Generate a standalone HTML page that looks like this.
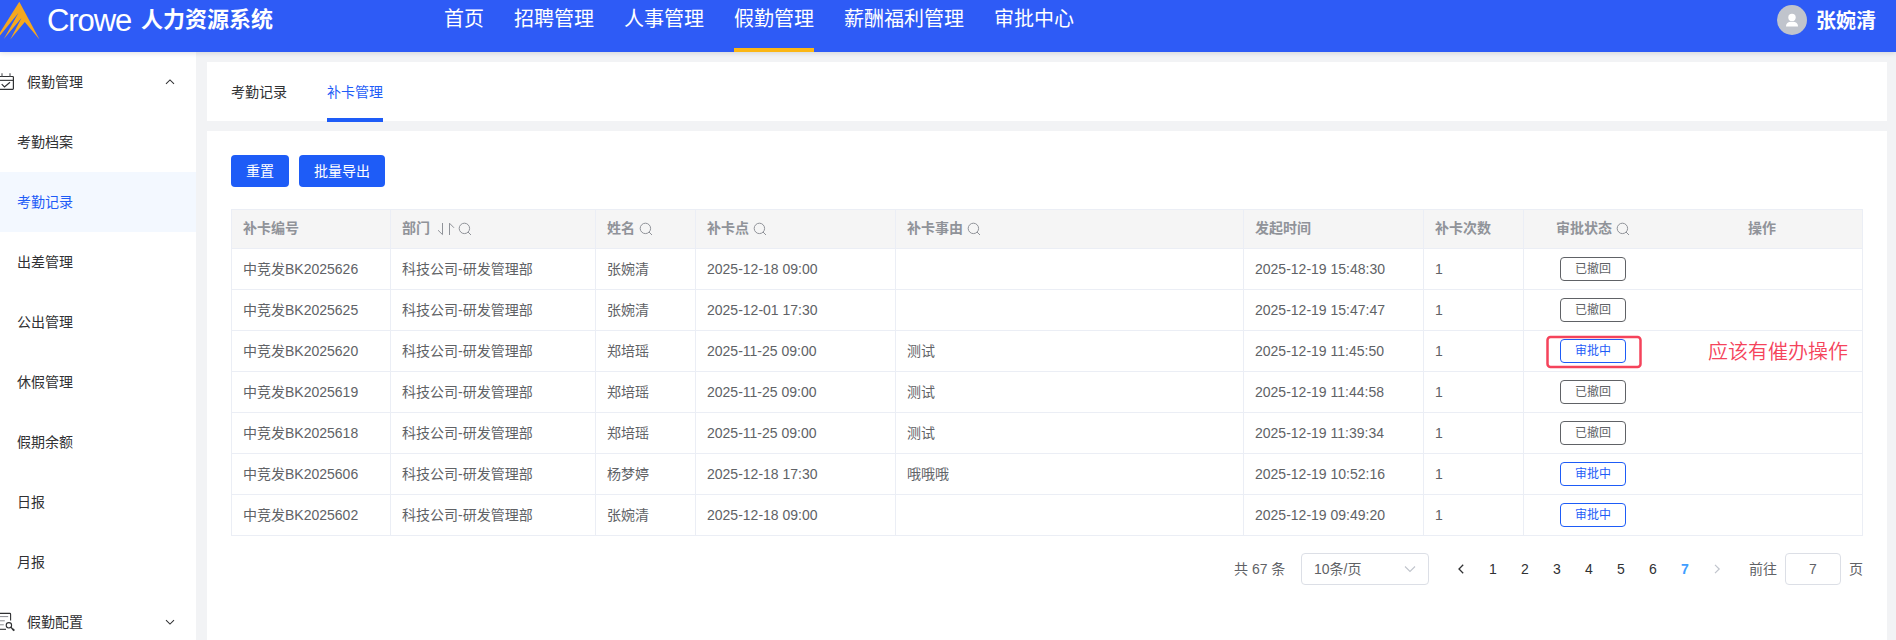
<!DOCTYPE html>
<html lang="zh-CN">
<head>
<meta charset="utf-8">
<title>人力资源系统</title>
<style>
*{box-sizing:border-box;margin:0;padding:0}
html,body{width:1896px;height:640px;overflow:hidden}
body{position:relative;background:#f2f3f5;font-family:"Liberation Sans","Noto Sans CJK SC",sans-serif;font-size:14px;color:#303133}
.abs{position:absolute}
/* header */
#hd{position:absolute;left:0;top:0;width:1896px;height:52px;background:#2e5bf6;box-shadow:0 1px 5px rgba(0,21,41,.14);z-index:5}
#hd .crowe{position:absolute;left:47px;top:2px;font-size:31px;line-height:37px;color:#fff;letter-spacing:-1.1px;font-weight:400}
#hd .title{position:absolute;left:141px;top:2px;font-size:22px;line-height:36px;font-weight:700;color:#fff;white-space:nowrap}
#hd .nav{position:absolute;top:0;height:52px;font-size:20px;line-height:38px;color:#fff;white-space:nowrap}
#hd .nav.on{border-bottom:4px solid #fbb614}
#hd .av{position:absolute;left:1777px;top:5px;width:30px;height:30px;border-radius:50%;background:#c0c4cc;overflow:hidden}
#hd .uname{position:absolute;left:1816px;top:3px;font-size:20px;line-height:36px;font-weight:700;color:#fff;white-space:nowrap}
/* sidebar */
#sb{position:absolute;left:0;top:52px;width:196px;height:588px;background:#fff}
#sb .it{position:absolute;left:0;width:196px;height:60px;line-height:60px;font-size:14px;color:#303133;white-space:nowrap}
#sb .it span{position:absolute;left:17px;top:0}
#sb .it.g span{left:27px}
#sb .it.on{background:#f3f8ff;color:#1e5cf7}
#sb svg{position:absolute}
/* cards */
.card{position:absolute;background:#fff}
.tab{position:absolute;top:62px;height:59px;line-height:60px;font-size:14px;color:#303133;white-space:nowrap}
.tab.on{color:#1e5cf7}
.btn{position:absolute;top:155px;height:32px;line-height:32px;border-radius:4px;background:#1e5cf7;color:#fff;font-size:14px;text-align:center}
/* table */
#tb{position:absolute;left:231px;top:209px;width:1632px;border-collapse:separate;border-spacing:0;table-layout:fixed;border-top:1px solid #ebeef5;border-left:1px solid #ebeef5;border-right:1px solid #ebeef5;font-size:14px;color:#606266}
#tb th,#tb td{border-bottom:1px solid #ebeef5;border-right:1px solid #ebeef5;padding:0 0 0 11px;text-align:left;white-space:nowrap;overflow:hidden;vertical-align:middle}
#tb th{height:39px;line-height:22px;padding-bottom:2px;background:#f5f5f5;color:#909399;font-weight:700}
#tb td{height:41px;line-height:22px;background:#fff}
#tb .c{text-align:center;padding-left:0}
#tb .nb{border-right:none}
.tag{display:inline-block;width:66px;height:24px;line-height:22px;border:1px solid #606266;border-radius:4px;font-size:12px;color:#606266;text-align:center;vertical-align:middle;background:#fff}
.tag.b{border-color:#1e5cf7;color:#1e5cf7}
th svg{vertical-align:-4px}
/* pagination */
.pg{position:absolute;top:553px;height:32px;line-height:32px;font-size:14px;color:#606266;white-space:nowrap}
.pn{position:absolute;top:553px;width:32px;height:32px;line-height:32px;text-align:center;font-size:14px;color:#303133}
.box{position:absolute;top:553px;height:32px;border:1px solid #dcdfe6;border-radius:4px;background:#fff;line-height:30px;font-size:14px;color:#606266}
</style>
</head>
<body>
<!-- HEADER -->
<div id="hd">
  <svg class="abs" style="left:0;top:0" width="42" height="42" viewBox="0 0 42 42">
    <path d="M19.3 1.8 L39.5 39.4 L24.8 22 L10.2 39.4 L21.5 17.9 L3.8 39 L18.4 13 L0 35.6 L0 32.4 Z" fill="#f5a81f"/>
  </svg>
  <div class="crowe">Crowe</div>
  <div class="title">人力资源系统</div>
  <div class="nav" style="left:444px">首页</div>
  <div class="nav" style="left:514px">招聘管理</div>
  <div class="nav" style="left:624px">人事管理</div>
  <div class="nav on" style="left:734px">假勤管理</div>
  <div class="nav" style="left:844px">薪酬福利管理</div>
  <div class="nav" style="left:994px">审批中心</div>
  <div class="av">
    <svg width="30" height="30" viewBox="0 0 30 30"><circle cx="15" cy="12.4" r="3.7" fill="#fff"/><path d="M9 21.4 C9 18.2 11.5 16.8 15 16.8 C18.5 16.8 21 18.2 21 21.4 Z" fill="#fff"/></svg>
  </div>
  <div class="uname">张婉清</div>
</div>

<!-- SIDEBAR -->
<div id="sb">
  <div class="it g" style="top:0"><span>假勤管理</span></div>
  <div class="it" style="top:60px"><span>考勤档案</span></div>
  <div class="it on" style="top:120px"><span>考勤记录</span></div>
  <div class="it" style="top:180px"><span>出差管理</span></div>
  <div class="it" style="top:240px"><span>公出管理</span></div>
  <div class="it" style="top:300px"><span>休假管理</span></div>
  <div class="it" style="top:360px"><span>假期余额</span></div>
  <div class="it" style="top:420px"><span>日报</span></div>
  <div class="it" style="top:480px"><span>月报</span></div>
  <div class="it g" style="top:540px"><span>假勤配置</span></div>
  <!-- calendar-check icon -->
  <svg style="left:0;top:20px" width="16" height="20" viewBox="0 0 16 20" fill="none" stroke="#303133" stroke-width="1.2">
    <path d="M-2 4.5 H12.6 Q13.4 4.5 13.4 5.3 V16.6 Q13.4 17.4 12.6 17.4 H-2"/><path d="M-2 8.35 H13.4" stroke-width="1.1"/><path d="M2 1.2 V4.4 M10 1.2 V4.4" stroke="#606266"/><path d="M1.7 12.2 L4.5 15 L10 10.2"/>
  </svg>
  <!-- chevron up -->
  <svg style="left:164px;top:26px" width="12" height="8" viewBox="0 0 12 8" fill="none" stroke="#303133" stroke-width="1.05"><path d="M2 5.8 L6 1.9 L10 5.8"/></svg>
  <!-- doc-search icon -->
  <svg style="left:0;top:558px" width="16" height="22" viewBox="0 0 16 22" fill="none" stroke="#303133" stroke-width="1.1">
    <path d="M-2 3.4 H9.8 Q10.6 3.4 10.6 4.2 V10.6"/><path d="M-2 19.3 H6"/><path d="M-1 6.6 H8.2 M-1 10.8 H4.8 M-1 14.8 H3.8" stroke="#8a8c91" stroke-width="1"/><circle cx="8.9" cy="15.3" r="2.7"/><path d="M10.9 17.3 L12.6 19" stroke-width="1.3"/><path d="M12.4 18.8 L14.3 20.7" stroke-width="1.9"/>
  </svg>
  <!-- chevron down -->
  <svg style="left:164px;top:566px" width="12" height="8" viewBox="0 0 12 8" fill="none" stroke="#303133" stroke-width="1.05"><path d="M2 2.2 L6 6.1 L10 2.2"/></svg>
</div>

<!-- TABS CARD -->
<div class="card" style="left:207px;top:62px;width:1680px;height:59px"></div>
<div class="tab" style="left:231px">考勤记录</div>
<div class="tab on" style="left:327px">补卡管理</div>
<div class="abs" style="left:327px;top:118px;width:56px;height:4px;background:#1e5cf7"></div>

<!-- MAIN CARD -->
<div class="card" style="left:207px;top:131px;width:1680px;height:509px"></div>
<div class="btn" style="left:231px;width:58px">重置</div>
<div class="btn" style="left:299px;width:86px">批量导出</div>

<table id="tb">
<colgroup><col style="width:159px"><col style="width:205px"><col style="width:100px"><col style="width:200px"><col style="width:348px"><col style="width:180px"><col style="width:100px"><col style="width:138px"><col style="width:200px"></colgroup>
<thead><tr>
<th>补卡编号</th>
<th>部门 <svg width="38" height="16" viewBox="0 0 38 16" fill="none" stroke="#909399" stroke-width="1"><path d="M8.5 2 V13.6 L4 9.2"/><path d="M15.5 14 V2.2 L20 6.8"/><circle cx="30.4" cy="7.4" r="5.2"/><path d="M34 11 L37 14"/></svg></th>
<th>姓名 <svg width="14" height="16" viewBox="0 0 14 16" fill="none" stroke="#909399" stroke-width="1"><circle cx="6.4" cy="7.4" r="5.2"/><path d="M10 11 L13 14"/></svg></th>
<th>补卡点 <svg width="14" height="16" viewBox="0 0 14 16" fill="none" stroke="#909399" stroke-width="1"><circle cx="6.4" cy="7.4" r="5.2"/><path d="M10 11 L13 14"/></svg></th>
<th>补卡事由 <svg width="14" height="16" viewBox="0 0 14 16" fill="none" stroke="#909399" stroke-width="1"><circle cx="6.4" cy="7.4" r="5.2"/><path d="M10 11 L13 14"/></svg></th>
<th>发起时间</th>
<th>补卡次数</th>
<th class="c nb">审批状态 <svg width="14" height="16" viewBox="0 0 14 16" fill="none" stroke="#909399" stroke-width="1"><circle cx="6.4" cy="7.4" r="5.2"/><path d="M10 11 L13 14"/></svg></th>
<th class="c nb">操作</th>
</tr></thead>
<tbody>
<tr><td>中竞发BK2025626</td><td>科技公司-研发管理部</td><td>张婉清</td><td>2025-12-18 09:00</td><td></td><td>2025-12-19 15:48:30</td><td>1</td><td class="c nb"><span class="tag">已撤回</span></td><td class="nb"></td></tr>
<tr><td>中竞发BK2025625</td><td>科技公司-研发管理部</td><td>张婉清</td><td>2025-12-01 17:30</td><td></td><td>2025-12-19 15:47:47</td><td>1</td><td class="c nb"><span class="tag">已撤回</span></td><td class="nb"></td></tr>
<tr><td>中竞发BK2025620</td><td>科技公司-研发管理部</td><td>郑培瑶</td><td>2025-11-25 09:00</td><td>测试</td><td>2025-12-19 11:45:50</td><td>1</td><td class="c nb"><span class="tag b">审批中</span></td><td class="nb"></td></tr>
<tr><td>中竞发BK2025619</td><td>科技公司-研发管理部</td><td>郑培瑶</td><td>2025-11-25 09:00</td><td>测试</td><td>2025-12-19 11:44:58</td><td>1</td><td class="c nb"><span class="tag">已撤回</span></td><td class="nb"></td></tr>
<tr><td>中竞发BK2025618</td><td>科技公司-研发管理部</td><td>郑培瑶</td><td>2025-11-25 09:00</td><td>测试</td><td>2025-12-19 11:39:34</td><td>1</td><td class="c nb"><span class="tag">已撤回</span></td><td class="nb"></td></tr>
<tr><td>中竞发BK2025606</td><td>科技公司-研发管理部</td><td>杨梦婷</td><td>2025-12-18 17:30</td><td>哦哦哦</td><td>2025-12-19 10:52:16</td><td>1</td><td class="c nb"><span class="tag b">审批中</span></td><td class="nb"></td></tr>
<tr><td>中竞发BK2025602</td><td>科技公司-研发管理部</td><td>张婉清</td><td>2025-12-18 09:00</td><td></td><td>2025-12-19 09:49:20</td><td>1</td><td class="c nb"><span class="tag b">审批中</span></td><td class="nb"></td></tr>
</tbody>
</table>

<!-- red annotation -->
<svg class="abs" style="left:1540px;top:330px" width="110" height="45" viewBox="0 0 110 45"><rect x="7.5" y="7" width="93" height="30" rx="3" fill="none" stroke="#f5435b" stroke-width="2.5"/></svg>
<div class="abs" style="left:1708px;top:337px;font-size:20px;line-height:30px;color:#f5435b;white-space:nowrap;font-weight:350">应该有催办操作</div>

<!-- PAGINATION -->
<div class="pg" style="left:1234px">共 67 条</div>
<div class="box" style="left:1301px;width:128px;padding-left:12px">10条/页
  <svg class="abs" style="left:102px;top:11px" width="12" height="8" viewBox="0 0 12 8" fill="none" stroke="#c0c4cc" stroke-width="1.1"><path d="M1 1.5 L6 6.5 L11 1.5"/></svg>
</div>
<svg class="abs" style="left:1455px;top:562px" width="12" height="14" viewBox="0 0 12 14" fill="none" stroke="#303133" stroke-width="1.3"><path d="M8.2 2.8 L4 7 L8.2 11.2"/></svg>
<div class="pn" style="left:1477px">1</div>
<div class="pn" style="left:1509px">2</div>
<div class="pn" style="left:1541px">3</div>
<div class="pn" style="left:1573px">4</div>
<div class="pn" style="left:1605px">5</div>
<div class="pn" style="left:1637px">6</div>
<div class="pn" style="left:1669px;color:#409eff;font-weight:700">7</div>
<svg class="abs" style="left:1711px;top:562px" width="12" height="14" viewBox="0 0 12 14" fill="none" stroke="#c0c4cc" stroke-width="1.2"><path d="M4 2.8 L8.2 7 L4 11.2"/></svg>
<div class="pg" style="left:1749px">前往</div>
<div class="box" style="left:1785px;width:56px;text-align:center">7</div>
<div class="pg" style="left:1849px">页</div>
</body>
</html>
